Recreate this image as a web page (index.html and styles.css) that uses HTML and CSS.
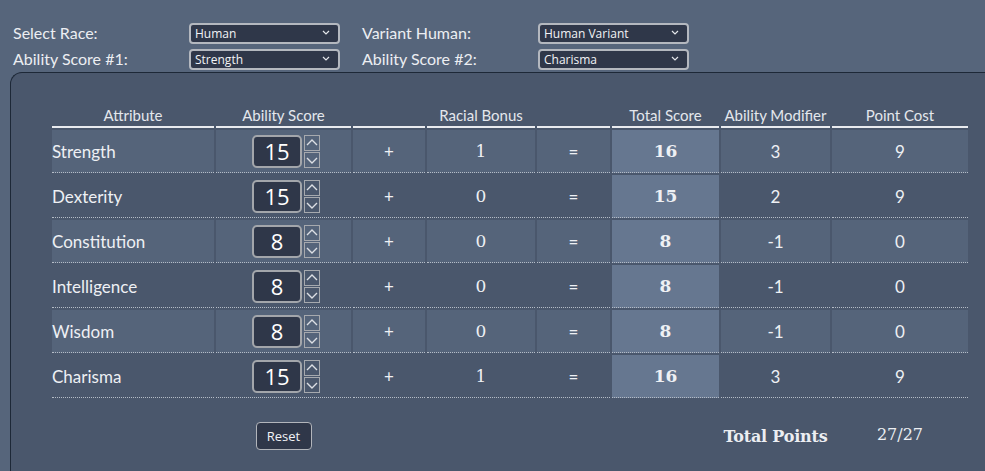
FILE: index.html
```html
<!DOCTYPE html>
<html lang="en">
<head>
  <meta charset="UTF-8">
  <meta name="viewport" content="width=device-width, initial-scale=1.0">
  <title>Point Buy Calculator</title>
  <link rel="stylesheet" href="styles.css">
</head>
<body>
  <!-- Race selection -->
  <div class="race-form">
    <label>Select Race:</label>
    <div class="select-wrap">
      <select><option>Human</option></select>
      <svg class="chev" width="8" height="5" viewBox="0 0 8 5"><path d="M1 1 L4 4 L7 1" fill="none" stroke="#e4e6ea" stroke-width="1.2"/></svg>
    </div>
    <label>Variant Human:</label>
    <div class="select-wrap">
      <select><option>Human Variant</option></select>
      <svg class="chev" width="8" height="5" viewBox="0 0 8 5"><path d="M1 1 L4 4 L7 1" fill="none" stroke="#e4e6ea" stroke-width="1.2"/></svg>
    </div>
    <label>Ability Score #1:</label>
    <div class="select-wrap">
      <select><option>Strength</option></select>
      <svg class="chev" width="8" height="5" viewBox="0 0 8 5"><path d="M1 1 L4 4 L7 1" fill="none" stroke="#e4e6ea" stroke-width="1.2"/></svg>
    </div>
    <label>Ability Score #2:</label>
    <div class="select-wrap">
      <select><option>Charisma</option></select>
      <svg class="chev" width="8" height="5" viewBox="0 0 8 5"><path d="M1 1 L4 4 L7 1" fill="none" stroke="#e4e6ea" stroke-width="1.2"/></svg>
    </div>
  </div>

  <!-- Score table -->
  <div class="panel">
    <table class="scores">
      <colgroup>
        <col style="width:162px"><col style="width:135px"><col style="width:72px"><col style="width:108px">
        <col style="width:73px"><col style="width:107px"><col style="width:109px"><col style="width:136px">
      </colgroup>
      <thead>
        <tr>
          <th>Attribute</th><th>Ability Score</th><th></th><th>Racial Bonus</th>
          <th></th><th>Total Score</th><th>Ability Modifier</th><th>Point Cost</th>
        </tr>
      </thead>
      <tbody id="rows"></tbody>
      <tfoot>
        <tr>
          <td></td>
          <td><button class="reset">Reset</button></td>
          <td colspan="4"></td>
          <td class="total-label">Total Points</td>
          <td class="total-value">27/27</td>
        </tr>
      </tfoot>
    </table>
  </div>

  <script>
    const attributes = [
      ['Strength', 15, 1, 16, 3, 9],
      ['Dexterity', 15, 0, 15, 2, 9],
      ['Constitution', 8, 0, 8, -1, 0],
      ['Intelligence', 8, 0, 8, -1, 0],
      ['Wisdom', 8, 0, 8, -1, 0],
      ['Charisma', 15, 1, 16, 3, 9]
    ];

    const up = '<svg width="14" height="14" viewBox="0 0 14 14"><path d="M2 9 L7 4 L12 9" fill="none" stroke="#dcdfe4" stroke-width="1.4"/></svg>';
    const down = '<svg width="14" height="14" viewBox="0 0 14 14"><path d="M2 5 L7 10 L12 5" fill="none" stroke="#dcdfe4" stroke-width="1.4"/></svg>';

    const rows = document.getElementById('rows');
    attributes.forEach(([name, score, bonus, total, mod, cost]) => {
      const tr = document.createElement('tr');
      tr.innerHTML = `
        <td class="name">${name}</td>
        <td>
          <div class="spin">
            <input class="spin-box" value="${score}" readonly>
            <div class="spin-btns"><span class="spin-btn">${up}</span><span class="spin-btn">${down}</span></div>
          </div>
        </td>
        <td>+</td>
        <td class="bonus">${bonus}</td>
        <td>=</td>
        <td class="total">${total}</td>
        <td>${mod}</td>
        <td>${cost}</td>`;
      rows.appendChild(tr);
    });
  </script>
</body>
</html>
```

FILE: styles.css
```css
* {
  margin: 0;
  padding: 0;
  box-sizing: border-box;
}

body {
  font-family: 'Lato', sans-serif;
  background-color: #56657b;
  color: #eef0f4;
  overflow: hidden;
  height: 100vh;
}

/* Selecao de raca */
.race-form {
  display: grid;
  grid-template-columns: 176px 173px 176px 151px;
  row-gap: 5px;
  align-items: center;
  padding: 22px 0 0 13px;
}

.race-form label {
  font-size: 16px;
  color: #eceef2;
}

.select-wrap {
  position: relative;
  width: 151px;
  height: 21px;
}

.select-wrap select {
  appearance: none;
  width: 100%;
  height: 100%;
  background-color: #2f3749;
  color: #f2f3f6;
  border: 2px solid #b4b8bf;
  border-radius: 4px;
  font-family: 'Open Sans', sans-serif;
  font-size: 12px;
  padding: 0 0 0 4px;
  outline: none;
}

.select-wrap .chev {
  position: absolute;
  right: 10px;
  top: 8px;
  pointer-events: none;
}

/* Painel da tabela */
.panel {
  margin: 3px 0 0 10px;
  background-color: #4a576c;
  border: 1px solid #1d2837;
  border-right: none;
  border-bottom: none;
  border-radius: 12px 0 0 0;
  padding: 31px 0 0 39px;
  height: calc(100vh - 72px);
}

.scores {
  table-layout: fixed;
  width: 920px;
  border-collapse: separate;
  border-spacing: 2px;
}

.scores th {
  font-size: 15px;
  font-weight: normal;
  color: #e4e7ec;
  height: 22px;
  padding: 0 0 2px;
  border-bottom: 2px solid #e9ebef;
}

.scores tbody td {
  height: 43px;
  font-size: 17px;
  text-align: center;
  border-bottom: 1px dotted #b5bcc7;
}

.scores tbody tr:nth-child(odd) td {
  background-color: #55647a;
}

.scores tbody td.name {
  text-align: left;
}

.scores tbody td.bonus {
  font-family: 'DejaVu Serif', serif;
  font-size: 17px;
}

.scores tbody td.total,
.scores tbody tr:nth-child(odd) td.total {
  background-color: #667790;
  font-family: 'DejaVu Serif', serif;
  font-weight: bold;
  font-size: 17px;
}

/* Campo numerico */
.spin {
  display: flex;
  justify-content: center;
  align-items: center;
  gap: 2px;
  padding-left: 5px;
}

.spin-box {
  width: 50px;
  height: 33px;
  background-color: #2f3749;
  border: 2px solid #a3a6ab;
  border-radius: 5px;
  color: #fff;
  font-family: 'Open Sans', sans-serif;
  font-size: 22px;
  text-align: center;
  outline: none;
}

.spin-btns {
  display: flex;
  flex-direction: column;
  gap: 1px;
}

.spin-btn {
  display: flex;
  width: 16px;
  height: 16px;
  border: 1px solid #a6a9ae;
}

/* Rodape */
.scores tfoot td {
  vertical-align: top;
  padding-top: 22px;
  text-align: center;
}

.reset {
  width: 56px;
  height: 28px;
  background-color: #2f3749;
  color: #f2f3f6;
  border: 1px solid #b2b5bb;
  border-radius: 4px;
  font-family: 'Open Sans', sans-serif;
  font-size: 13px;
}

.total-label {
  font-family: 'DejaVu Serif', serif;
  font-weight: bold;
  font-size: 16px;
  letter-spacing: -0.2px;
  line-height: 30px;
  color: #eceef2;
}

.total-value {
  font-family: 'DejaVu Serif', serif;
  font-size: 16px;
  line-height: 26px;
  color: #eceef2;
}
```
